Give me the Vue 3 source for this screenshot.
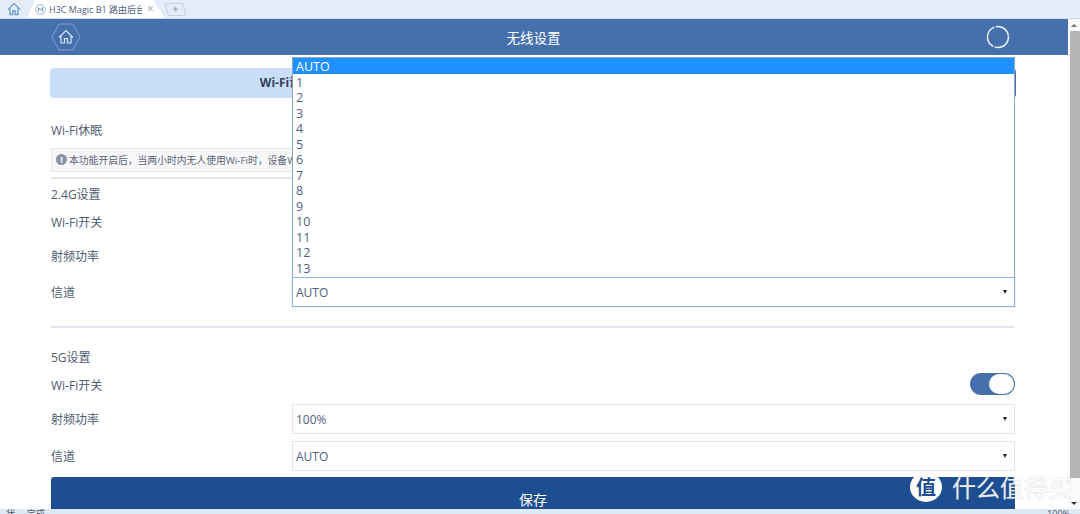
<script setup>
const options = ['AUTO', '1', '2', '3', '4', '5', '6', '7', '8', '9', '10', '11', '12', '13']
</script>

<template>
  <div class="window">
    <div class="tabbar">
      <svg class="homeglyph" width="14" height="14" viewBox="0 0 14 14" fill="none" stroke="#6f9cc9" stroke-width="1.3"><path d="M1 7.500 7 1.600l6 5.900M3 6.200V12.500h2.800V9h2.400v3.500H11V6.200"/></svg>
      <div class="tab">
        <svg width="11" height="11" viewBox="0 0 13 13" fill="none" stroke="#8fb0d8"><path d="M3.500 1h6l3 5.500-3 5.500h-6L.5 6.500z"/><path d="M4 9V4.200l2.500 3 2.500-3V9" stroke="#5b7fae"/></svg>
        <span class="tabtitle">H3C Magic B1 路由后台</span>
        <span class="tabclose">×</span>
      </div>
      <div class="newtab">+</div>
    </div>

    <div class="body">
      <div class="page">
        <header class="head">
          <div class="head-inner">
            <svg class="hex" width="30" height="28" viewBox="0 0 30 28" fill="none">
              <path d="M8 1h14l7 13-7 13H8L1 14z" stroke="#7f9fc8" />
              <path d="M8 14.500 15 7.500l7 7M10 13v7h3.500v-4.500h3V20H20v-7" stroke="#dbe6f3" stroke-width="1.200"/>
            </svg>
            <h1>无线设置</h1>
            <svg class="ring" width="24" height="24" viewBox="0 0 24 24" fill="none">
              <circle cx="12" cy="12" r="10.500" stroke="#f1f5fa" stroke-width="1.500" stroke-dasharray="20 1.500 24 1.500 18 1" />
            </svg>
          </div>
        </header>

        <main class="content">
          <div class="tabs">
            <div class="tab-on">Wi-Fi设置</div>
            <div class="tab-off"></div>
          </div>

          <div class="row sleep-row"><span>Wi-Fi休眠</span></div>
          <div class="notice">
            <i class="info">!</i>
            <span class="notice-text">本功能开启后，当两小时内无人使用Wi-Fi时，设备Wi-Fi将自动关闭</span>
          </div>
          <div class="rule first-rule"></div>

          <div class="sub">2.4G设置</div>
          <div class="row switch-row"><span>Wi-Fi开关</span></div>
          <div class="row power-row"><span>射频功率</span></div>
          <div class="row select-row">
            <span class="label">信道</span>
            <div class="select focus"><span>AUTO</span><i class="arrow"></i></div>
          </div>
          <div class="rule second-rule"></div>

          <div class="sub five">5G设置</div>
          <div class="row switch-row">
            <span>Wi-Fi开关</span>
            <div class="toggle"><i></i></div>
          </div>
          <div class="row select-row p5">
            <span class="label">射频功率</span>
            <div class="select"><span>100%</span><i class="arrow"></i></div>
          </div>
          <div class="row select-row c5">
            <span class="label">信道</span>
            <div class="select"><span>AUTO</span><i class="arrow"></i></div>
          </div>
          <button class="save">保存</button>
        </main>

        <ul class="dropdown">
          <li v-for="(o, i) in options" :key="o" :class="{ on: i === 0 }">{{ o }}</li>
        </ul>
      </div>

      <div class="scrollbar">
        <i class="up"></i>
        <div class="thumb"></div>
        <i class="down"></i>
      </div>
    </div>

    <div class="status">
      <span class="st-left">状</span><span>完成</span>
      <span class="st-right">100%</span>
    </div>

    <div class="mark">
      <span class="mark-logo">值</span>
      <span class="mark-text">什么值得买</span>
    </div>
  </div>
</template>

<style>
html, body { margin: 0; padding: 0; background: #fff; }
</style>

<style scoped>
.window {
  position: relative;
  width: 1080px;
  height: 514px;
  overflow: hidden;
  display: flex;
  flex-direction: column;
  font-family: "Open Sans", "Noto Sans CJK SC", sans-serif;
  color: #4a5568;
  background: #fff;
}
.tabbar {
  height: 19px;
  flex: none;
  display: flex;
  align-items: center;
  background: #e3ecf7;
  border-bottom: 1px solid #cbd8e8;
  box-sizing: border-box;
}
.homeglyph { margin-left: 7px; flex: none; }
.tab {
  margin-left: 6px;
  width: 138px;
  height: 18px;
  box-sizing: border-box;
  background: #fff;
  display: flex;
  align-items: center;
  padding-left: 8px;
  gap: 3px;
  font-size: 9px;
  color: #4d5f7c;
  white-space: nowrap;
  overflow: hidden;
  clip-path: polygon(8px 0, 126px 0, 138px 100%, 0 100%);
}
.tab svg { flex: none; }
.tabtitle { width: 93px; overflow: hidden; flex: none; }
.tabclose { color: #8da3bd; font-size: 12px; line-height: 1; margin-left: 2px; }
.newtab {
  margin-left: 1px;
  width: 17px;
  height: 11px;
  border: 1px solid #c4d2e4;
  border-radius: 2px;
  font-size: 11px;
  line-height: 10px;
  text-align: center;
  color: #7d90a8;
  transform: skewX(15deg);
}
.body { flex: 1; display: flex; min-height: 0; }
.page { position: relative; width: 1068px; overflow: hidden; flex: none; }
.head { height: 36px; background: #4670ab; }
.head-inner {
  width: 964px;
  height: 36px;
  margin-left: 51px;
  display: flex;
  align-items: center;
  justify-content: space-between;
}
.hex { flex: none; }
.ring { margin-right: 5px; flex: none; }
.head h1 {
  margin: 0;
  font-size: 13.500px;
  font-weight: 400;
  color: #fff;
}
.content { margin-left: 51px; width: 964px; padding-top: 13px; }
.tabs {
  display: flex;
  height: 30px;
  margin: 0 -1px;
  border-radius: 4px;
  overflow: hidden;
}
.tab-on {
  flex: 1;
  background: #c9dff7;
  line-height: 30px;
  text-align: center;
  font-size: 12px;
  font-weight: 700;
  color: #33415c;
  padding-right: 20px;
}
.tab-off { flex: 1; background: #4670ab; }
.row {
  display: flex;
  align-items: center;
  justify-content: space-between;
  font-size: 12px;
  color: #4f5b70;
}
.sleep-row { margin-top: 22px; height: 20px; }
.notice {
  margin-top: 8px;
  height: 24px;
  box-sizing: border-box;
  border: 1px solid #e4e7ec;
  background: #f7f7f9;
  display: flex;
  align-items: center;
  padding-left: 4px;
  gap: 2px;
  font-size: 9.800px;
  color: #5a6475;
  white-space: nowrap;
}
.notice-text { width: 224px; overflow: hidden; flex: none; }
.info {
  width: 11px;
  height: 11px;
  border-radius: 50%;
  background: #8b94a3;
  color: #fff;
  font-style: normal;
  font-size: 9px;
  line-height: 11px;
  text-align: center;
  font-weight: 700;
  margin-bottom: 2px;
}
.rule { height: 2px; background: #e1e5ee; }
.first-rule { margin-top: 5px; }
.sub { font-size: 12px; color: #4f5b70; margin-top: 5px; height: 20px; line-height: 22px; }
.switch-row { height: 20px; margin-top: 8px; }
.power-row { height: 20px; margin-top: 14px; }
.select-row { height: 30px; }
.select-row .label { width: 241px; flex: none; }
.select {
  flex: 1;
  height: 30px;
  box-sizing: border-box;
  border: 1px solid #e4e4e4;
  display: flex;
  align-items: center;
  justify-content: space-between;
  padding: 0 7px 0 3px;
  font-size: 12px;
  color: #4f5f80;
}
.select.focus { border: 1px solid #8fb2e8; box-shadow: 0 0 1px #8fb2e8; }
.arrow {
  width: 0;
  height: 0;
  border-left: 2.500px solid transparent;
  border-right: 2.500px solid transparent;
  border-top: 4px solid #222;
}
.power-row + .select-row { margin-top: 11px; }
.second-rule { margin-top: 19px; }
.five { margin-top: 19px; }
.toggle {
  width: 45px;
  height: 22px;
  border-radius: 11px;
  background: #4670ab;
  position: relative;
  top: -1px;
}
.toggle i {
  position: absolute;
  right: 1px;
  top: 1px;
  width: 25px;
  height: 20px;
  border-radius: 10px;
  background: #fff;
}
.p5 { margin-top: 9px; }
.c5 { margin-top: 7px; }
.save {
  display: block;
  width: 100%;
  height: 44px;
  margin-top: 6px;
  border: 0;
  border-radius: 3px 3px 0 0;
  background: #1c4e91;
  color: #fff;
  font-family: inherit;
  font-size: 14px;
}
.dropdown {
  position: absolute;
  left: 292px;
  top: 38px;
  width: 723px;
  height: 220px;
  box-sizing: border-box;
  margin: 0;
  padding: 0;
  list-style: none;
  background: #fff;
  border: 1px solid #8fa5c4;
  border-bottom: 0;
  font-size: 12.500px;
  color: #4f5f80;
}
.dropdown li { height: 15.500px; line-height: 18px; padding-left: 3px; }
.dropdown li.on { background: #1e90ff; color: #fff; height: 15.500px; }
.scrollbar {
  flex: 1;
  background: #fafafa;
  position: relative;
  display: flex;
  flex-direction: column;
}
.thumb { width: 10px; height: 447px; background: #b4b4b4; margin-left: 2px; margin-top: 12px; }
.up, .down {
  position: absolute;
  width: 0;
  height: 0;
  left: 3px;
  border-left: 3px solid transparent;
  border-right: 3px solid transparent;
}
.up { top: 5px; border-bottom: 3px solid #777; }
.down { bottom: 4px; border-top: 3px solid #333; }
.status {
  height: 5px;
  flex: none;
  background: #dde9f6;
  font-size: 9px;
  line-height: 10px;
  color: #556;
  padding-left: 27px;
  position: relative;
  overflow: hidden;
}
.st-left { position: absolute; left: 6px; top: 0; }
.st-right { position: absolute; right: 10px; top: 0; }
.mark {
  position: absolute;
  left: 910px;
  top: 472px;
  display: flex;
  align-items: center;
  gap: 10px;
  color: #fff;
}
.mark-logo {
  width: 32px;
  height: 30px;
  border-radius: 50%;
  background: #fff;
  color: #1c4e91;
  font-size: 20px;
  line-height: 30px;
  text-align: center;
  font-weight: 700;
  font-family: "Noto Sans CJK SC", sans-serif;
}
.mark-text {
  font-family: "Noto Sans CJK SC", sans-serif;
  font-size: 24px;
  line-height: 30px;
  color: #fff;
  text-shadow: 0 0 1px rgba(150, 150, 150, 0.800);
  opacity: 0.900;
}
</style>
